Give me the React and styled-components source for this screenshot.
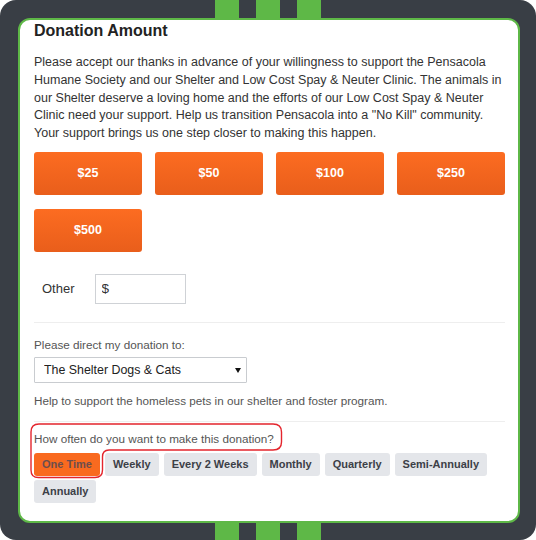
import React from "react";
import styled, { createGlobalStyle } from "styled-components";

const GREEN = "#5eb847";
const DARK = "#393e45";
const ORANGE_TOP = "#fc6c21";
const ORANGE_BOTTOM = "#e95e1b";

const Global = createGlobalStyle`
  html, body { margin: 0; padding: 0; background: #ffffff; }
  body { font-family: "Liberation Sans", Arial, sans-serif; }
  * { box-sizing: border-box; }
`;

const Frame = styled.div`
  width: 536px;
  height: 540px;
  border-radius: 16px;
  display: flex;
  padding: 18px 16px 17px 18px;
  background:
    linear-gradient(${GREEN}, ${GREEN}) 215px 0 / 24px 100% no-repeat,
    linear-gradient(${GREEN}, ${GREEN}) 256px 0 / 24px 100% no-repeat,
    linear-gradient(${GREEN}, ${GREEN}) 297px 0 / 24px 100% no-repeat,
    ${DARK};
`;

const Card = styled.div`
  flex: 1;
  position: relative;
  background: #ffffff;
  border: 2px solid ${GREEN};
  border-radius: 12px;
  padding: 1px 13px 0 14px;
  overflow: hidden;
`;

const Heading = styled.h2`
  margin: 0;
  font-size: 16px;
  line-height: 20px;
  font-weight: 700;
  color: #222222;
`;

const Intro = styled.p`
  margin: 13px 0 0;
  font-size: 12.5px;
  line-height: 17.75px;
  color: #333333;
`;

const AmountGrid = styled.div`
  margin-top: 9px;
  display: grid;
  grid-template-columns: repeat(4, 1fr);
  column-gap: 13px;
  row-gap: 14px;
`;

const AmountButton = styled.button`
  height: 43px;
  border: none;
  border-radius: 3px;
  background: linear-gradient(${ORANGE_TOP}, ${ORANGE_BOTTOM});
  color: #ffffff;
  font-family: inherit;
  font-size: 12.5px;
  font-weight: 700;
  cursor: pointer;
  padding: 0;
`;

const OtherRow = styled.div`
  margin-top: 22px;
  padding-left: 8px;
  display: flex;
  align-items: center;
  gap: 20px;
`;

const OtherLabel = styled.label`
  font-size: 13px;
  color: #333333;
`;

const OtherInput = styled.input`
  width: 91px;
  height: 30px;
  border: 1px solid #cfd2d6;
  padding: 0 6px;
  font-family: inherit;
  font-size: 13.5px;
  color: #333333;
  outline: none;
`;

const Divider = styled.hr`
  border: none;
  height: 1px;
  background: #eeeeee;
  margin: ${(p) => p.$top}px 0 0;
`;

const FieldLabel = styled.div`
  margin-top: ${(p) => p.$top}px;
  font-size: 11.7px;
  line-height: 16px;
  color: #555555;
`;

const SelectWrap = styled.div`
  position: relative;
  width: 213px;
  margin-top: 4px;
`;

const Select = styled.select`
  display: block;
  width: 213px;
  height: 26px;
  appearance: none;
  -webkit-appearance: none;
  border: 1px solid #c9ccd0;
  border-radius: 1px;
  background: #ffffff;
  padding: 0 0 0 9px;
  font-family: inherit;
  font-size: 12.4px;
  color: #222222;
  outline: none;
`;

const Caret = styled.span`
  position: absolute;
  right: 6px;
  top: 11px;
  width: 0;
  height: 0;
  border-left: 3px solid transparent;
  border-right: 3px solid transparent;
  border-top: 5px solid #111111;
  pointer-events: none;
`;

const FreqWrap = styled.div`
  margin-top: 6px;
  display: flex;
  flex-wrap: wrap;
  column-gap: 5px;
  row-gap: 4px;
`;

const FreqButton = styled.button`
  height: 23px;
  padding: 0 8px;
  border: none;
  border-radius: 3px;
  font-family: inherit;
  font-size: 11px;
  font-weight: 700;
  cursor: pointer;
  background: ${(p) => (p.$active ? "#f96a1f" : "#e4e6ea")};
  color: ${(p) => (p.$active ? "#6c4e4d" : "#3c4047")};
`;

const Annotation = styled.svg`
  position: absolute;
  left: 0;
  top: 0;
  width: 498px;
  height: 501px;
  pointer-events: none;
`;

const amounts = ["$25", "$50", "$100", "$250", "$500"];
const frequencies = [
  "One Time",
  "Weekly",
  "Every 2 Weeks",
  "Monthly",
  "Quarterly",
  "Semi-Annually",
  "Annually",
];

export default function App() {
  return (
    <>
      <Global />
      <Frame>
        <Card>
          <Heading>Donation Amount</Heading>
          <Intro>
            Please accept our thanks in advance of your willingness to support the
            Pensacola Humane Society and our Shelter and Low Cost Spay &amp; Neuter
            Clinic. The animals in our Shelter deserve a loving home and the efforts
            of our Low Cost Spay &amp; Neuter Clinic need your support. Help us
            transition Pensacola into a "No Kill" community. Your support brings us
            one step closer to making this happen.
          </Intro>
          <AmountGrid>
            {amounts.map((a) => (
              <AmountButton key={a}>{a}</AmountButton>
            ))}
          </AmountGrid>
          <OtherRow>
            <OtherLabel>Other</OtherLabel>
            <OtherInput defaultValue="$" />
          </OtherRow>
          <Divider $top={18} />
          <FieldLabel $top={14}>Please direct my donation to:</FieldLabel>
          <SelectWrap>
            <Select defaultValue="shelter">
              <option value="shelter">The Shelter Dogs &amp; Cats</option>
              <option value="clinic">Low Cost Spay &amp; Neuter Clinic</option>
            </Select>
            <Caret />
          </SelectWrap>
          <FieldLabel $top={10}>
            Help to support the homeless pets in our shelter and foster program.
          </FieldLabel>
          <Divider $top={12} />
          <FieldLabel $top={9}>How often do you want to make this donation?</FieldLabel>
          <FreqWrap>
            {frequencies.map((f, i) => (
              <FreqButton key={f} $active={i === 0}>
                {f}
              </FreqButton>
            ))}
          </FreqWrap>
          <Annotation viewBox="0 0 498 501">
            <path
              d="M 19 404 H 253 Q 261.5 404 261.5 412 V 422 Q 261.5 430 253 430 H 89 Q 82.5 430 82.5 437 V 450 Q 82.5 457.5 75 457.5 H 18.5 Q 11 457.5 11 450 V 412 Q 11 404 19 404 Z"
              fill="none"
              stroke="#e4252d"
              strokeWidth="1.4"
            />
          </Annotation>
        </Card>
      </Frame>
    </>
  );
}
